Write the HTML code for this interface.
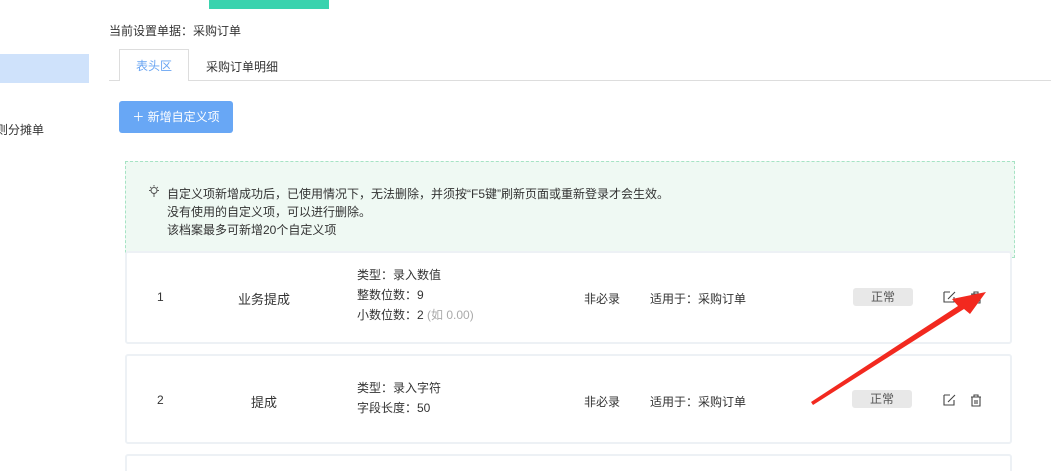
<!DOCTYPE html><html><head><meta charset="utf-8"><style>
*{margin:0;padding:0;box-sizing:border-box}
html,body{width:1051px;height:471px;overflow:hidden}
body{background:#fff;font-family:"Liberation Sans","Noto Sans CJK SC",sans-serif;font-size:12px;color:#333;position:relative}
.a{position:absolute;white-space:nowrap}
.card{position:absolute;left:125px;width:887px;border:2px solid #edf1f5;border-radius:3px;background:#fff}
.tag{position:absolute;width:60px;height:18px;background:#e8e8e8;border-radius:3px;color:#555;text-align:center;line-height:18px;font-size:12px}
</style></head><body>
<div class="a" style="left:209px;top:0;width:120px;height:9px;background:#3ad3ae"></div>
<div class="a" style="left:0;top:54px;width:89px;height:29px;background:#cfe2fb"></div>
<div class="a" style="left:-4px;top:121px;font-size:12px">则分摊单</div>
<div class="a" style="left:109px;top:22px">当前设置单据：采购订单</div>
<div class="a" style="left:109px;top:80px;width:942px;height:1px;background:#ddd"></div>
<div class="a" style="left:119px;top:49px;width:70px;height:32px;border:1px solid #ddd;border-bottom:none;background:#fff;color:#6aa5f2;text-align:center;line-height:32px">表头区</div>
<div class="a" style="left:206px;top:58px">采购订单明细</div>
<div class="a" style="left:119px;top:101px;width:114px;height:32px;background:#68a7f5;border-radius:3px;color:#fff;line-height:32px;text-align:center;font-size:12px">＋ 新增自定义项</div>
<div class="a" style="left:125px;top:161px;width:890px;height:97px;border:1px dashed #a6e3c4;background:#eff9f3"></div>
<svg class="a" style="left:147px;top:184px" width="14" height="14" viewBox="0 0 14 14" fill="none" stroke="#555" stroke-width="1"><circle cx="7" cy="6.5" r="3"/><path d="M6 10h2M6 12h2M7 1v1.5M2 6.5h1.5M10.5 6.5H12M3.2 3l1 1M10.8 3l-1 1"/></svg>
<div class="a" style="left:167px;top:185px;line-height:18px">自定义项新增成功后，已使用情况下，无法删除，并须按“F5键”刷新页面或重新登录才会生效。<br>没有使用的自定义项，可以进行删除。<br>该档案最多可新增20个自定义项</div>
<div class="card" style="top:251px;height:93px"></div>
<div class="a" style="left:157px;top:290px">1</div>
<div class="a" style="left:238px;top:289px;font-size:13px">业务提成</div>
<div class="a" style="left:357px;top:265px;line-height:20px">类型：录入数值<br>整数位数：9<br>小数位数：2 <span style="color:#aaa">(如 0.00)</span></div>
<div class="a" style="left:584px;top:290px">非必录</div>
<div class="a" style="left:650px;top:290px">适用于：采购订单</div>
<div class="tag" style="left:853px;top:288px">正常</div>
<div class="card" style="top:354px;height:90px"></div>
<div class="a" style="left:157px;top:393px">2</div>
<div class="a" style="left:251px;top:392px;font-size:13px">提成</div>
<div class="a" style="left:357px;top:378px;line-height:20px">类型：录入字符<br>字段长度：50</div>
<div class="a" style="left:584px;top:393px">非必录</div>
<div class="a" style="left:650px;top:393px">适用于：采购订单</div>
<div class="tag" style="left:852px;top:390px">正常</div>
<div class="card" style="top:454px;height:30px"></div>
<svg class="a" style="left:0;top:0" width="1051" height="471">
<g fill="none" stroke="#444" stroke-width="1.1">
<path d="M944 292h6M944 292v10h10v-5M948 299l7-7"/>
<path d="M971 294h10M974 294v-2h4v2M972 294v9h8v-9M975 297v4M977 297v4"/>
<path d="M944 395h6M944 395v10h10v-5M948 402l7-7"/>
<path d="M971 397h10M974 397v-2h4v2M972 397v9h8v-9M975 400v4M977 400v4"/>
</g>
<polygon points="811,402 958,306 952,299 986,292 970,314 964,309 813,405" fill="#f2291f"/>
</svg>
</body></html>
